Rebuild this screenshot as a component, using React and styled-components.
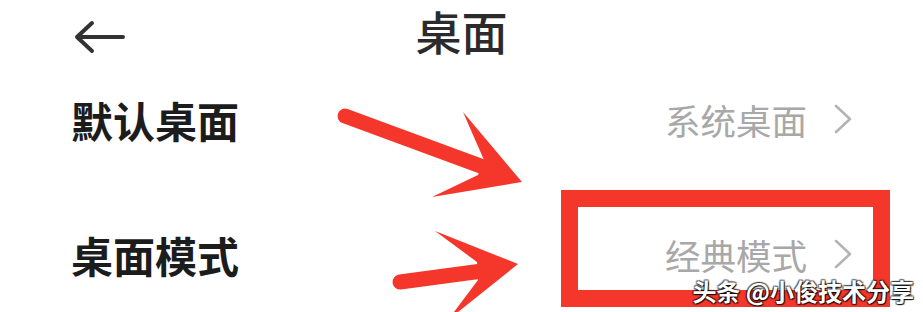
import React from 'react';
import styled, { createGlobalStyle } from 'styled-components';

const GlobalStyle = createGlobalStyle`
  html, body {
    margin: 0;
    padding: 0;
    background: #ffffff;
  }
  body {
    font-family: "Noto Sans CJK SC", "Noto Sans", sans-serif;
  }
`;

const Screen = styled.div`
  position: relative;
  width: 923px;
  height: 312px;
  overflow: hidden;
  background: #ffffff;
`;

const Header = styled.div`
  display: grid;
  grid-template-columns: 1fr auto 1fr;
  align-items: center;
  height: 70px;
  padding-left: 74px;
  padding-right: 74px;
`;

const BackButton = styled.div`
  display: flex;
  align-items: center;
  width: 52px;
  height: 34px;
  margin-top: 4px;
`;

const Title = styled.h1`
  margin: 0;
  padding-bottom: 8px;
  font-size: 46px;
  line-height: 1.2;
  font-weight: 500;
  color: #2b2b2b;
`;

const List = styled.div`
  display: flex;
  flex-direction: column;
  gap: 35px;
  padding: 0 70px 0 71px;
`;

const Row = styled.div`
  display: flex;
  align-items: center;
  justify-content: space-between;
  height: 100px;
`;

const Label = styled.span`
  font-size: 42px;
  line-height: 1.2;
  font-weight: 700;
  color: #1c1c1c;
`;

const Value = styled.span`
  display: flex;
  align-items: center;
  gap: 26px;
  font-size: 35.5px;
  line-height: 1.2;
  color: #a8a8a8;
`;

const Overlay = styled.svg`
  position: absolute;
  left: 0;
  top: 0;
  pointer-events: none;
`;

const Watermark = styled.div`
  position: absolute;
  right: 9px;
  bottom: 6px;
  font-size: 24px;
  line-height: 1.2;
  color: #ffffff;
  font-weight: 700;
  text-shadow: 1px 1px 1px rgba(0, 0, 0, 0.9), -1px -1px 1px rgba(0, 0, 0, 0.55),
    1px -1px 1px rgba(0, 0, 0, 0.55), -1px 1px 1px rgba(0, 0, 0, 0.55);
`;

const BackArrow = () => (
  <svg width="52" height="34" viewBox="0 0 52 34">
    <path
      d="M49 17 H3 M18 3 L3 17 L18 31"
      fill="none"
      stroke="#333333"
      strokeWidth="4"
      strokeLinecap="round"
      strokeLinejoin="round"
    />
  </svg>
);

const Chevron = () => (
  <svg width="20" height="32" viewBox="0 0 20 32">
    <path
      d="M3 2 L17 15 L3 28"
      fill="none"
      stroke="#b4b4b4"
      strokeWidth="2.6"
      strokeLinecap="round"
      strokeLinejoin="round"
    />
  </svg>
);

const RED = '#f4362b';

const rows = [
  { label: '默认桌面', value: '系统桌面' },
  { label: '桌面模式', value: '经典模式' },
];

export default function App() {
  return (
    <>
      <GlobalStyle />
      <Screen>
        <Header>
          <BackButton>
            <BackArrow />
          </BackButton>
          <Title>桌面</Title>
          <span />
        </Header>
        <List>
          {rows.map((r) => (
            <Row key={r.label}>
              <Label>{r.label}</Label>
              <Value>
                {r.value}
                <Chevron />
              </Value>
            </Row>
          ))}
        </List>

        <Overlay width="923" height="312" viewBox="0 0 923 312">
          <line x1="345" y1="116" x2="486" y2="168" stroke={RED} strokeWidth="15" strokeLinecap="round" />
          <polygon points="463,112 522,182 432,197 478,175 484,160" fill={RED} />
          <line x1="400" y1="282" x2="482" y2="271" stroke={RED} strokeWidth="15" strokeLinecap="round" />
          <polygon points="435,231 518,264 448,320 478,280 477,262" fill={RED} />
          <rect x="569.5" y="198.5" width="312" height="100" fill="none" stroke={RED} strokeWidth="17" />
        </Overlay>

        <Watermark>头条 @小俊技术分享</Watermark>
      </Screen>
    </>
  );
}
